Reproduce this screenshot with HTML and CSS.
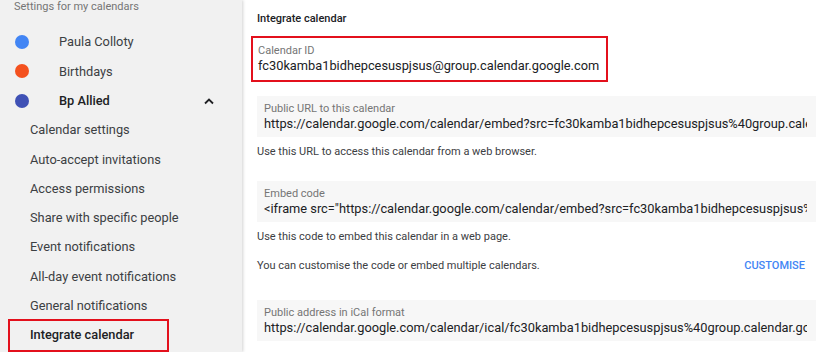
FILE: index.html
```html
<!DOCTYPE html>
<html lang="en">
<head>
    <meta charset="UTF-8">
    <title>Settings - Integrate calendar</title>
    <link rel="stylesheet" href="styles.css">
</head>
<body>
    <div class="app">
        <nav class="sidebar">
            <div class="side-title">Settings for my calendars</div>
            <ul class="cal-list">
                <li class="cal-item"><span class="dot" style="background:#4285f4"></span>Paula Colloty</li>
                <li class="cal-item"><span class="dot" style="background:#f4511e"></span>Birthdays</li>
                <li class="cal-item open">
                    <span class="dot" style="background:#3f51b5"></span>Bp Allied
                    <svg class="chevron" width="12" height="8" viewBox="0 0 12 8"><polyline points="2,6.5 6,2.5 10,6.5" fill="none" stroke="#202124" stroke-width="1.8"/></svg>
                </li>
            </ul>
            <ul class="sub-list">
                <li>Calendar settings</li>
                <li>Auto-accept invitations</li>
                <li>Access permissions</li>
                <li>Share with specific people</li>
                <li>Event notifications</li>
                <li>All-day event notifications</li>
                <li>General notifications</li>
                <li class="marked">Integrate calendar</li>
            </ul>
        </nav>

        <main class="content">
            <h2 class="section-title">Integrate calendar</h2>

            <div class="cal-id">
                <div class="label">Calendar ID</div>
                <div class="value">fc30kamba1bidhepcesuspjsus@group.calendar.google.com</div>
            </div>

            <div class="field first">
                <div class="label">Public URL to this calendar</div>
                <div class="value">https://calendar.google.com/calendar/embed?src=fc30kamba1bidhepcesuspjsus%40group.calendar.google.com&amp;ctz=Europe%2FLondon</div>
            </div>
            <p class="help">Use this URL to access this calendar from a web browser.</p>

            <div class="field embed">
                <div class="label">Embed code</div>
                <div class="value">&lt;iframe src="https://calendar.google.com/calendar/embed?src=fc30kamba1bidhepcesuspjsus%40group.calendar.google.com" style="border: 0"&gt;</div>
            </div>
            <p class="help">Use this code to embed this calendar in a web page.</p>
            <div class="help-row">
                <p class="help">You can customise the code or embed multiple calendars.</p>
                <button class="link-btn">CUSTOMISE</button>
            </div>

            <div class="field ical">
                <div class="label">Public address in iCal format</div>
                <div class="value">https://calendar.google.com/calendar/ical/fc30kamba1bidhepcesuspjsus%40group.calendar.google.com/public/basic.ics</div>
            </div>
        </main>
    </div>
</body>
</html>
```

FILE: styles.css
```css
body {
    margin: 0;
    font-family: Roboto, "Liberation Sans", sans-serif;
    color: #202124;
    background: #fff;
    overflow: hidden;
}

.app {
    display: flex;
    height: 352px;
}

.sidebar {
    width: 242px;
    flex-shrink: 0;
    background: #f1f1f1;
    box-shadow: 1px 0 3px rgba(0, 0, 0, 0.18);
    position: relative;
    z-index: 1;
}

.side-title {
    font-size: 11px;
    line-height: 13px;
    padding-left: 14px;
    color: #757575;
    height: 27.35px;
}

.cal-list,
.sub-list {
    list-style: none;
    margin: 0;
    padding: 0;
}

.cal-item {
    display: flex;
    align-items: center;
    height: 29.3px;
    font-size: 12.8px;
    padding-left: 15px;
    color: #3c4043;
}

.cal-item.open {
    font-weight: 500;
    color: #202124;
}

.dot {
    width: 14px;
    height: 14px;
    border-radius: 50%;
    margin-right: 30px;
}

.chevron {
    margin-left: auto;
    margin-right: 27px;
}

.sub-list li {
    height: 29.3px;
    line-height: 29.3px;
    font-size: 12.8px;
    padding-left: 30px;
    color: #3c4043;
    position: relative;
}

.sub-list li.marked {
    font-weight: 500;
    color: #202124;
}

.sub-list li.marked::after {
    content: "";
    position: absolute;
    left: 8px;
    top: -1px;
    width: 157px;
    height: 29px;
    border: 2px solid #e3101c;
}

.content {
    flex: 1;
    padding-left: 15px;
    min-width: 0;
    overflow: hidden;
}

.section-title {
    margin: 11px 0 0;
    font-size: 11px;
    line-height: 16px;
    font-weight: 500;
    color: #202124;
}

.label {
    font-size: 11px;
    line-height: 13px;
    color: #757575;
}

.value {
    font-size: 12.8px;
    line-height: 17px;
    color: #202124;
    white-space: nowrap;
}

.cal-id {
    display: inline-block;
    margin: 9px 0 0 -6px;
    padding: 6px 7px 6px 5px;
    border: 2px solid #e3101c;
}

.field {
    background: #f7f7f7;
    padding: 6px 9px 5px 7px;
    height: 30px;
    overflow: hidden;
}

.field .value {
    line-height: 18px;
    overflow: hidden;
}

.field.first {
    margin-top: 14px;
}

.field.embed {
    margin-top: 22px;
}

.field.ical {
    margin-top: 27px;
}

.help {
    margin: 8px 0 0;
    font-size: 11px;
    line-height: 14px;
    color: #3c4043;
}

.help-row {
    display: flex;
    align-items: flex-end;
    justify-content: space-between;
}

.help-row .help {
    margin-top: 15px;
}

.link-btn {
    background: none;
    border: none;
    padding: 0;
    margin-right: 11px;
    font-family: inherit;
    font-size: 11px;
    line-height: 14px;
    font-weight: 500;
    color: #4285f4;
    cursor: pointer;
}
```
